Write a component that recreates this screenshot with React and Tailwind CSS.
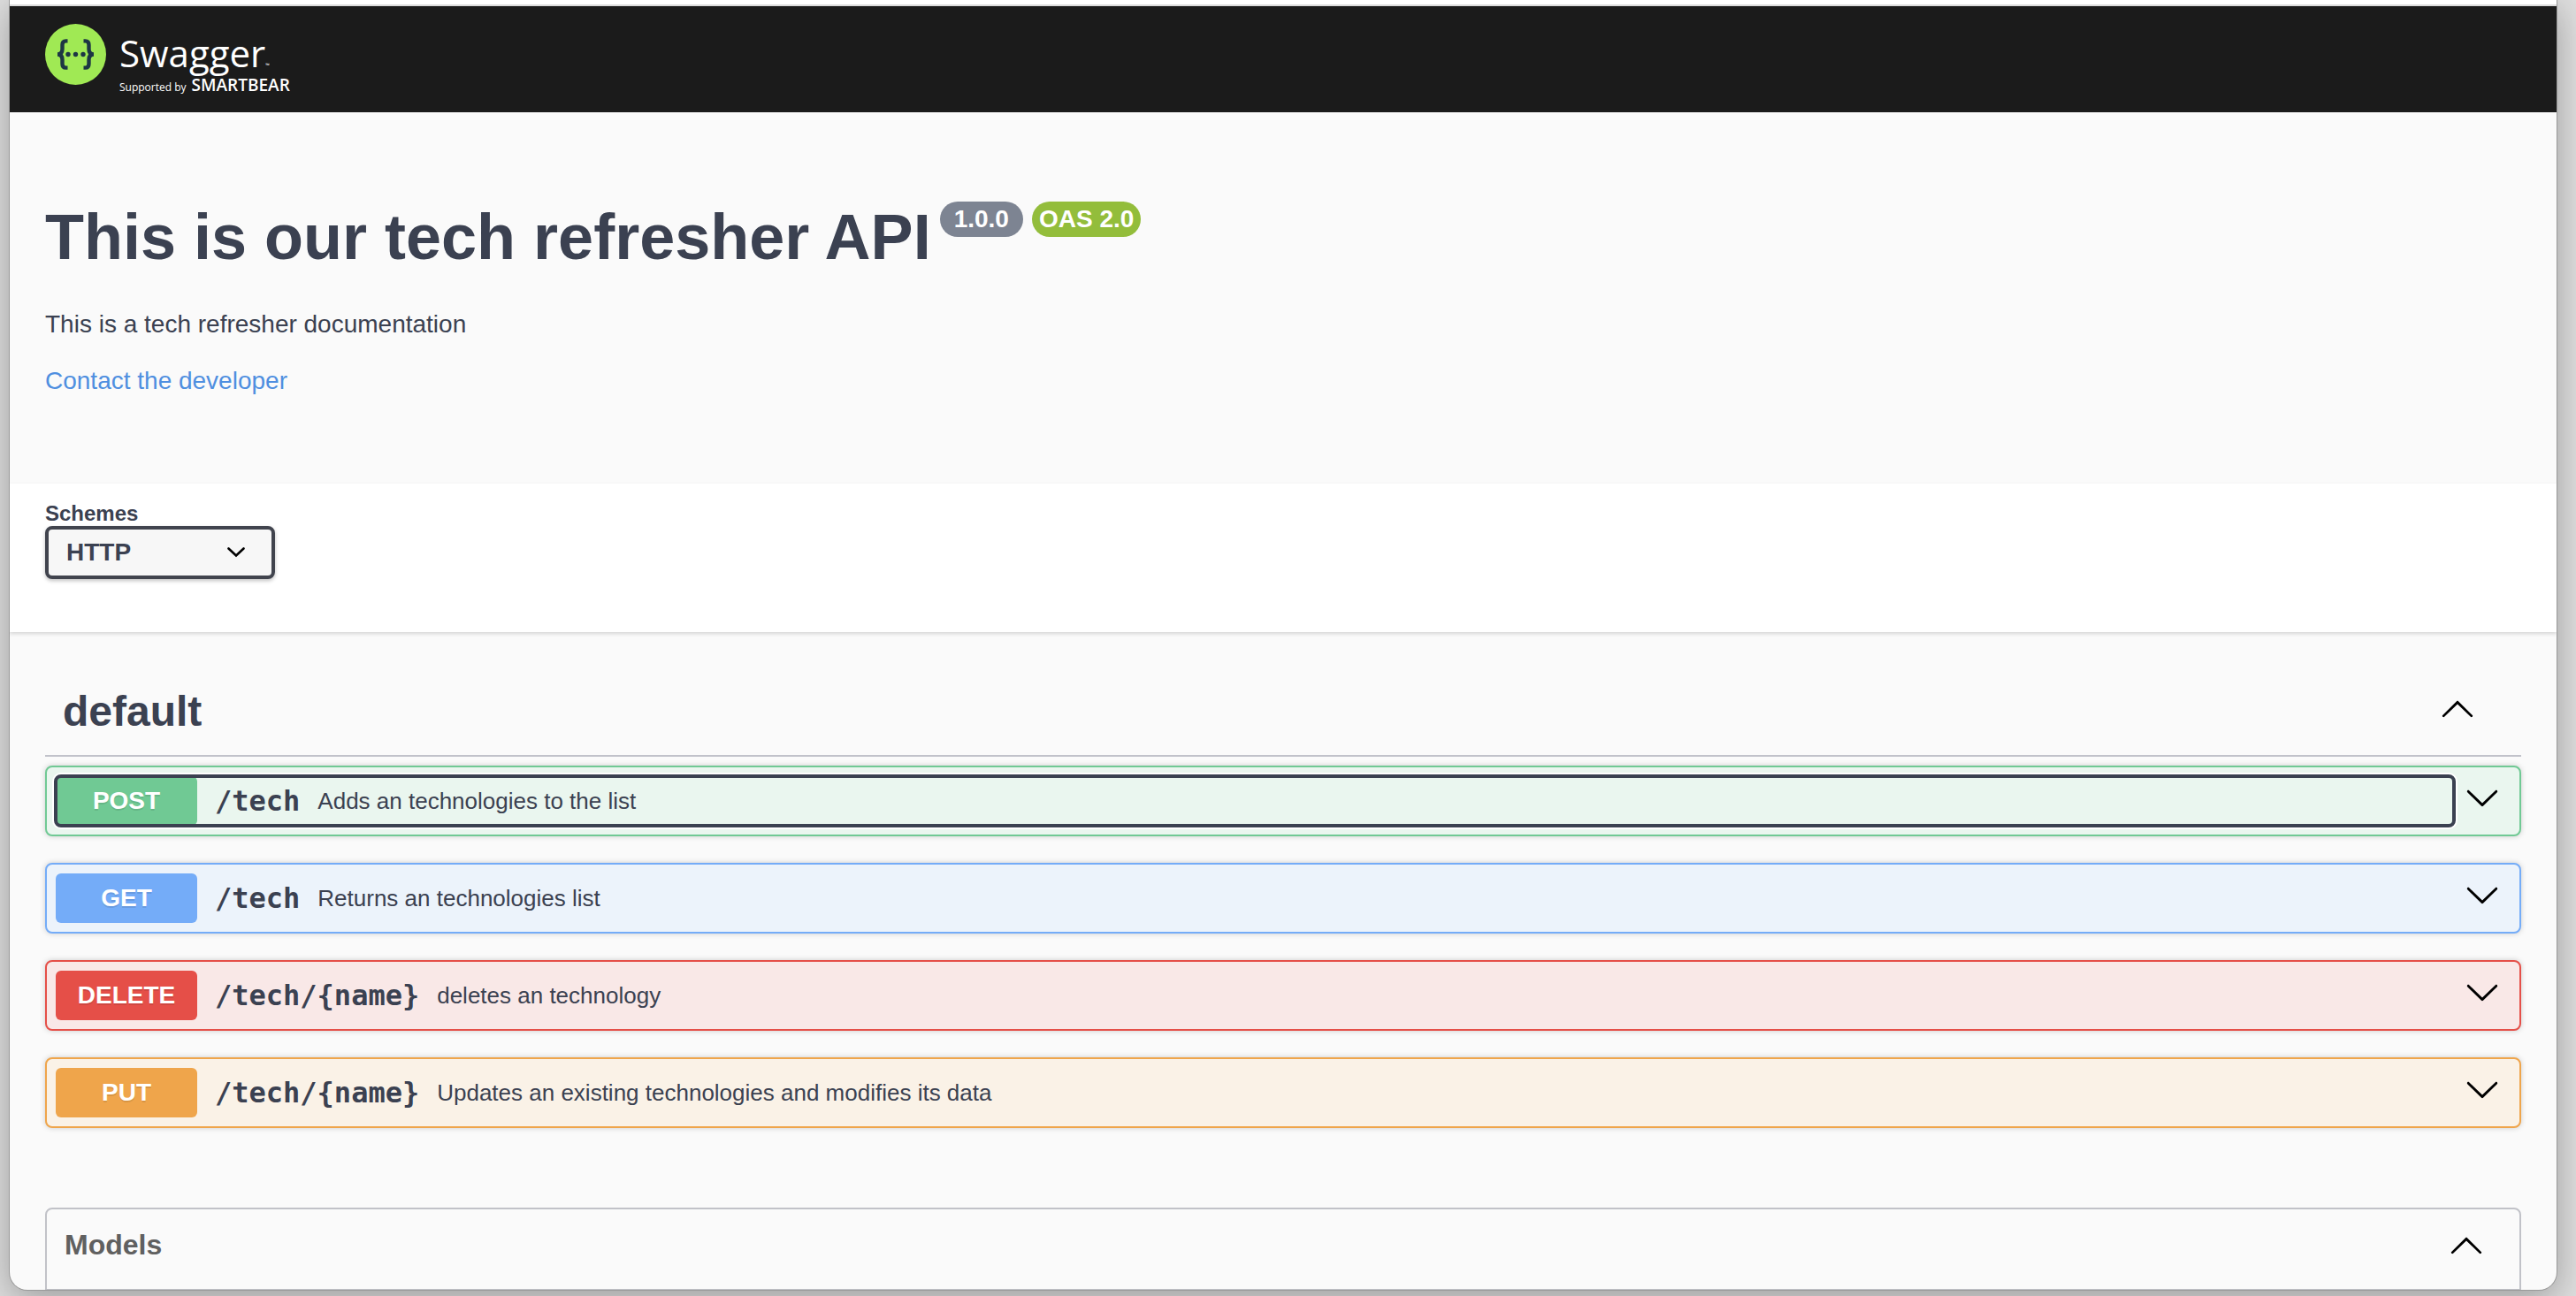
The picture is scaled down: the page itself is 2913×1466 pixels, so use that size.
import React from "react";

function ArrowDown() {
  return (
    <svg viewBox="0 0 20 20" className="size-10 shrink-0 fill-black" aria-hidden="true">
      <path d="M17.418 6.109c.272-.268.709-.268.979 0s.271.701 0 .969l-7.908 7.83c-.27.268-.707.268-.979 0l-7.908-7.83c-.27-.268-.27-.701 0-.969.271-.268.709-.268.979 0L10 13.25l7.418-7.141z" />
    </svg>
  );
}

function ArrowUp() {
  return (
    <svg viewBox="0 0 20 20" className="size-10 shrink-0 fill-black" aria-hidden="true">
      <path d="M17.418 14.908c.272.268.709.268.979 0s.271-.701 0-.969l-7.908-7.83c-.27-.268-.707-.268-.979 0l-7.908 7.83c-.27.268-.27.701 0 .969.271.268.709.268.979 0L10 7.767l7.418 7.141z" />
    </svg>
  );
}

function SwaggerMark() {
  return (
    <svg viewBox="0 0 69 69" className="size-[69px] shrink-0" aria-hidden="true">
      <circle cx="34.5" cy="34.5" r="34.5" fill="#a0e954" />
      <g fill="none" stroke="#1d3644" strokeWidth="4.4">
        <path d="M25.5 19.4h-2c-3 0-4 1.600-4 4.400v4.700c0 3.400-1.500 6-5.500 6c4 0 5.500 2.600 5.500 6v4.700c0 2.800 1 4.400 4 4.400h2" />
        <path d="M43.500 19.400h2c3 0 4 1.600 4 4.400v4.700c0 3.400 1.500 6 5.500 6c-4 0-5.500 2.600-5.500 6v4.700c0 2.800-1 4.400-4 4.400h-2" />
      </g>
      <g fill="#1d3644">
        <circle cx="26" cy="34.500" r="2.700" />
        <circle cx="34.500" cy="34.500" r="2.700" />
        <circle cx="43" cy="34.500" r="2.700" />
      </g>
    </svg>
  );
}

const operations = [
  {
    method: "POST",
    path: "/tech",
    summary: "Adds an technologies to the list",
    block: "border-[#70c994] bg-[#eaf6ef]",
    badge: "bg-[#70c994]",
    focused: true,
  },
  {
    method: "GET",
    path: "/tech",
    summary: "Returns an technologies list",
    block: "border-[#74acf8] bg-[#ecf3fb]",
    badge: "bg-[#74acf8]",
  },
  {
    method: "DELETE",
    path: "/tech/{name}",
    summary: "deletes an technology",
    block: "border-[#e54f48] bg-[#f9e8e7]",
    badge: "bg-[#e54f48]",
  },
  {
    method: "PUT",
    path: "/tech/{name}",
    summary: "Updates an existing technologies and modifies its data",
    block: "border-[#efa54b] bg-[#faf2e7]",
    badge: "bg-[#efa54b]",
  },
];

function Operation({ op }) {
  return (
    <div
      className={`flex items-center rounded-lg border-2 p-[10px] shadow-[0_0_6px_rgba(0,0,0,0.19)] ${op.block}`}
    >
      <button
        type="button"
        className={`flex min-w-0 flex-1 items-center gap-5 rounded-md text-left ${
          op.focused
            ? "shadow-[0_0_0_4px_white] outline-4 -outline-offset-2 outline-[#3b4151]"
            : "outline-none"
        }`}
      >
        <span
          className={`w-40 shrink-0 rounded-md text-center text-[28px] leading-[56px] font-bold text-white [text-shadow:0_2px_0_rgba(0,0,0,0.1)] ${op.badge}`}
        >
          {op.method}
        </span>
        <span className="font-['DejaVu_Sans_Mono',monospace] text-[32px] leading-10 font-bold">
          {op.path}
        </span>
        <span className="text-[26px] leading-10">{op.summary}</span>
      </button>
      <button type="button" aria-label={`Expand ${op.method} ${op.path}`} className="px-3 pb-2">
        <ArrowDown />
      </button>
    </div>
  );
}

function TopBar() {
  return (
    <header className="flex h-[120px] items-start bg-[#1b1b1b] px-10 pt-5">
      <a href="#" className="flex items-start gap-[15px] text-white font-['Open_Sans',sans-serif]">
        <SwaggerMark />
        <span className="flex flex-col pt-[23px]">
          <span className="flex items-baseline text-[42px] leading-5">
            Swagger<span className="text-[6px]">™</span>
          </span>
          <span className="flex items-baseline gap-[6px] text-xs leading-6">
            Supported by
            <span className="text-[19px] font-semibold">SMARTBEAR</span>
          </span>
        </span>
      </a>
    </header>
  );
}

export default function App() {
  return (
    <div className="flex min-h-screen flex-col overflow-hidden bg-[#dedede] pr-[22px] pb-[7px] pl-[11px] font-['Liberation_Sans',Arial,sans-serif] text-[#3b4151]">
      <div className="flex flex-1 flex-col overflow-hidden rounded-b-[20px] bg-[#fafafa] shadow-[0_0_0_1px_#999,0_10px_40px_rgba(0,0,0,0.3)]">
        <div className="h-[7px] border-b-2 border-[#dcdcdc] bg-white" />
        <TopBar />

        <section className="px-10 pt-[101px] pb-24">
          <div className="flex items-start">
            <h1 className="text-[72px] leading-[80px] font-bold">This is our tech refresher API</h1>
            <span className="ml-[10px] rounded-[20px] bg-[#7d8492] px-4 text-[28px] leading-10 font-bold text-white">
              1.0.0
            </span>
            <span className="ml-[10px] rounded-[20px] bg-[#93bd3b] px-2 text-[28px] leading-10 font-bold text-white">
              OAS 2.0
            </span>
          </div>
          <p className="mt-[39px] text-[28px] leading-10">This is a tech refresher documentation</p>
          <p className="mt-6 text-[28px] leading-10">
            <a href="#" className="text-[#4f8fe0]">
              Contact the developer
            </a>
          </p>
        </section>

        <section className="bg-white px-10 pt-5 pb-[60px] shadow-[0_2px_4px_rgba(0,0,0,0.15)]">
          <label htmlFor="schemes" className="block text-2xl leading-7 font-bold">
            Schemes
          </label>
          <div className="grid w-[260px] items-center">
            <select
              id="schemes"
              defaultValue="http"
              className="col-start-1 row-start-1 h-[60px] appearance-none rounded-lg border-4 border-[#41444e] bg-[#f7f7f7] pl-5 text-[28px] leading-10 font-bold shadow-[0_2px_4px_rgba(0,0,0,0.25)] outline-none"
            >
              <option value="http">HTTP</option>
            </select>
            <svg
              viewBox="0 0 20 12"
              className="pointer-events-none col-start-1 row-start-1 mr-[34px] h-3 w-5 justify-self-end"
              fill="none"
              stroke="black"
              strokeWidth="2.6"
              aria-hidden="true"
            >
              <path d="M1.500 1.500 10 9.500l8.500-8" strokeLinecap="round" />
            </svg>
          </div>
        </section>

        <main className="flex flex-1 flex-col px-10 pt-[41px]">
          <section>
            <div className="flex items-center justify-between border-b-2 border-[#c1c2ca] py-[21px] pr-[52px] pl-5">
              <h2 className="text-5xl leading-[56px] font-bold">default</h2>
              <button type="button" aria-label="Collapse operations" className="pb-2">
                <ArrowUp />
              </button>
            </div>
            <div className="mt-[10px] flex flex-col gap-[30px]">
              {operations.map((op) => (
                <Operation key={op.method + op.path} op={op} />
              ))}
            </div>
          </section>

          <section className="mt-[90px] flex-1 rounded-t-lg border-2 border-b border-[#c1c2c8]">
            <button
              type="button"
              className="flex w-full items-center justify-between py-5 pr-10 pl-5 text-[#606060]"
            >
              <span className="text-[32px] leading-10 font-bold">Models</span>
              <ArrowUp />
            </button>
          </section>
        </main>
      </div>
    </div>
  );
}
